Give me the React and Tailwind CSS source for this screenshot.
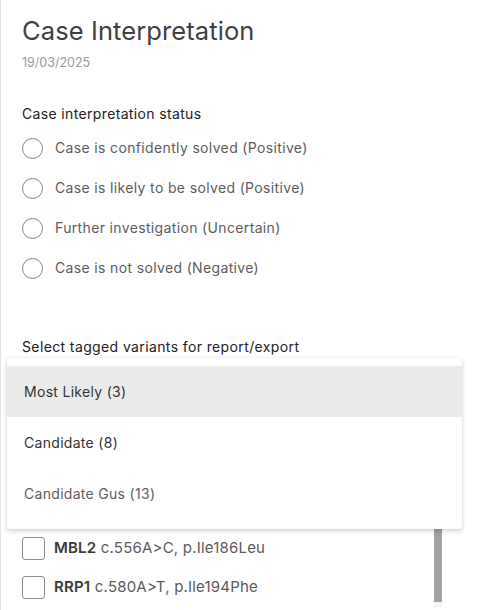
const STATUSES = [
  'Case is confidently solved (Positive)',
  'Case is likely to be solved (Positive)',
  'Further investigation (Uncertain)',
  'Case is not solved (Negative)',
]

const TAG_OPTIONS = [
  { label: 'Most Likely (3)', active: true },
  { label: 'Candidate (8)' },
  { label: 'Candidate Gus (13)', muted: true },
]

const VARIANTS = [
  { gene: 'MBL2', change: 'c.556A>C, p.Ile186Leu' },
  { gene: 'RRP1', change: 'c.580A>T, p.Ile194Phe' },
]

export default function App() {
  return (
    <div
      className="relative h-[610px] w-[480px] overflow-hidden border-l border-[#e4e4e4] bg-white px-[21px] pt-[15px]"
      style={{ fontFamily: 'Inter, "Noto Sans", sans-serif' }}
    >
      {/* header */}
      <h1 className="text-[25.5px] leading-8 font-normal tracking-[0.1px] text-[#3f3f3f]">Case Interpretation</h1>
      <div className="mt-2 text-[12.5px] leading-4 text-[#9a9a9a]">19/03/2025</div>

      {/* status radios */}
      <div className="mt-[33px] text-sm leading-5 tracking-[0.35px] text-[#222]">Case interpretation status</div>
      <div className="mt-1 flex flex-col">
        {STATUSES.map((s) => (
          <label key={s} className="flex h-10 items-center gap-3">
            <span className="h-[21px] w-[21px] shrink-0 rounded-full border-[1.5px] border-[#808080]" />
            <span className="text-sm tracking-[0.35px] text-[#5c5c5c]">{s}</span>
          </label>
        ))}
      </div>

      {/* tagged variants */}
      <div className="mt-[49px] text-sm leading-5 tracking-[0.38px] text-[#222]">Select tagged variants for report/export</div>
      <div className="relative mt-[1px]">
        <div className="h-[44px]" />
        <div className="flex w-[420px]">
          <div className="flex flex-1 flex-col pt-[127px]">
            {VARIANTS.map((v) => (
              <label key={v.gene} className="flex h-[39px] items-center gap-[9px]">
                <span className="h-[23px] w-[23px] shrink-0 rounded-[3px] border-[1.5px] border-[#8c8c8c]" />
                <span className="text-[15px] tracking-[0.2px] text-[#5a5a5a]">
                  <b className="font-semibold text-[#3a3a3a]">{v.gene}</b> {v.change}
                </span>
              </label>
            ))}
          </div>
          <div className="flex w-2 flex-col">
            <div className="h-[200px] bg-[#a2a2a2]" />
            <div className="flex-1 bg-[#f2f2f2]" />
          </div>
        </div>

        {/* open dropdown menu */}
        <div className="absolute top-0 left-[-15px] z-10 w-[455px] rounded-[3px] bg-white pt-2 pb-[10px] shadow-[0_2px_5px_rgba(0,0,0,0.18),0_0_1px_rgba(0,0,0,0.15)]">
          {TAG_OPTIONS.map((o) => (
            <div
              key={o.label}
              className={`flex h-[51px] items-center px-[17px] text-sm tracking-[0.3px] ${o.active ? 'bg-[#ebebeb]' : ''} ${o.muted ? 'text-[#5e5e5e]' : 'text-[#333]'}`}
            >
              {o.label}
            </div>
          ))}
        </div>
      </div>
    </div>
  )
}
